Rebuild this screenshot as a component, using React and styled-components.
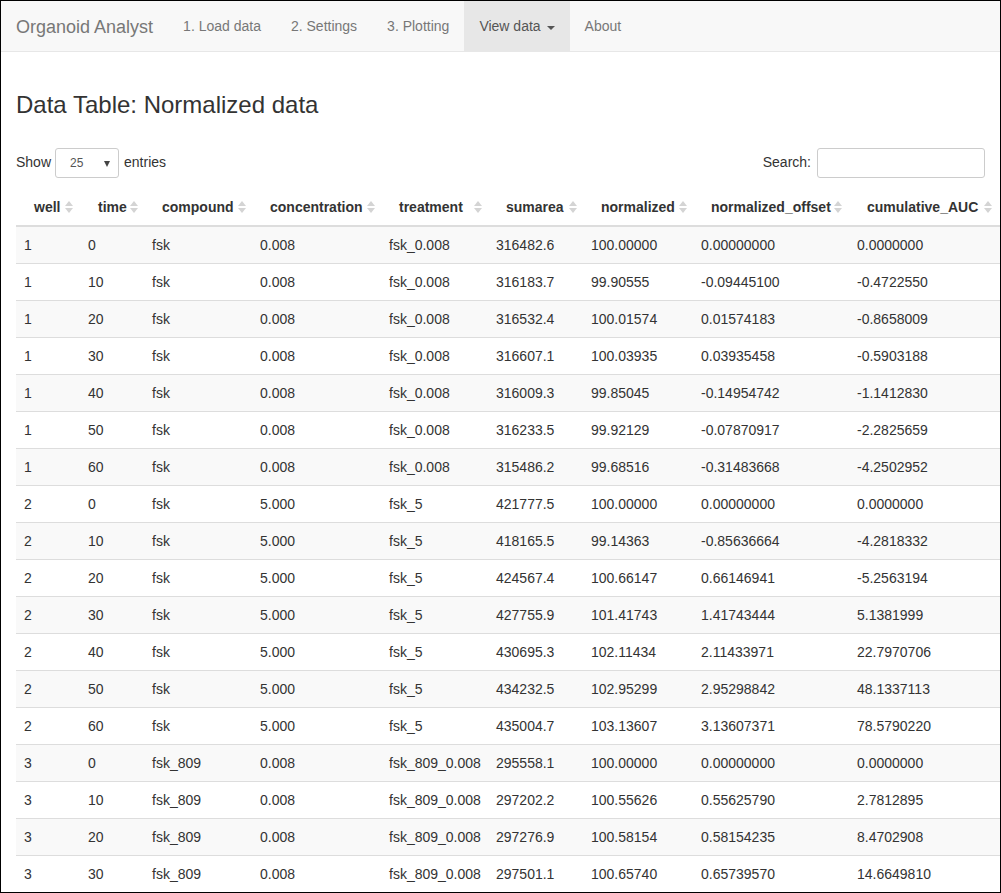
import React from "react";
import styled, { createGlobalStyle } from "styled-components";

const Global = createGlobalStyle`
  html, body { margin: 0; padding: 0; background: #fff; }
  body { font-family: "Liberation Sans", Arial, sans-serif; font-size: 14px; line-height: 1.42857; color: #333; }
  * { box-sizing: border-box; }
`;

const Frame = styled.div`
  width: 1001px;
  height: 893px;
  border: 1px solid #000;
  overflow: hidden;
  background: #fff;
`;

const Navbar = styled.nav`
  display: flex;
  align-items: stretch;
  height: 51px;
  background: #f8f8f8;
  border-bottom: 1px solid #e7e7e7;
  padding: 0 15px;
`;

const Brand = styled.div`
  font-size: 18px;
  line-height: 20px;
  color: #777;
  padding: 16px 15px 14px;
  margin-left: -15px;
`;

const NavItem = styled.div`
  display: flex;
  align-items: center;
  padding: 1px 15px 0;
  height: 50px;
  color: ${(p) => (p.$active ? "#555" : "#777")};
  background: ${(p) => (p.$active ? "#e7e7e7" : "transparent")};
`;

const Caret = styled.span`
  display: inline-block;
  width: 0;
  height: 0;
  margin-left: 6px;
  margin-top: 2px;
  border-top: 4px solid #555;
  border-left: 4px solid transparent;
  border-right: 4px solid transparent;
`;

const Container = styled.div`
  padding: 20px 15px 0;
`;

const Title = styled.h3`
  font-size: 24px;
  font-weight: 500;
  line-height: 1.1;
  margin: 20px 0 10px;
`;

const Controls = styled.div`
  display: flex;
  justify-content: space-between;
  align-items: center;
  margin-top: 30px;
  height: 30px;
`;

const Label = styled.label`
  display: flex;
  align-items: center;
  gap: 4px;
  white-space: nowrap;
`;

const SelectBox = styled.div`
  position: relative;
  width: 64px;
  height: 30px;
  border: 1px solid #ccc;
  border-radius: 3px;
  font-size: 12px;
  display: flex;
  align-items: center;
  padding-left: 14px;
  color: #555;
  margin-right: 1px;
`;

const Arrow = styled.span`
  position: absolute;
  right: 8px;
  top: 12px;
  width: 0;
  height: 0;
  border-top: 6px solid #444;
  border-left: 3.5px solid transparent;
  border-right: 3.5px solid transparent;
`;

const SearchInput = styled.input`
  width: 168px;
  height: 30px;
  border: 1px solid #ccc;
  border-radius: 3px;
  margin-left: 2px;
  font-size: 12px;
  padding: 5px 10px;
  outline: none;
`;

const Table = styled.table`
  width: 984px;
  table-layout: fixed;
  border-collapse: collapse;
  margin-top: 11px;
`;

const Th = styled.th`
  position: relative;
  text-align: left;
  font-weight: bold;
  padding: 8px 18px;
  line-height: 20px;
  border-bottom: 2px solid #ddd;
  white-space: nowrap;
`;

const SortIcon = styled.span`
  position: absolute;
  right: ${(p) => p.$right}px;
  top: 50%;
  transform: translateY(-50%);
  display: flex;
  flex-direction: column;
  gap: 2px;
  &::before, &::after {
    content: "";
    width: 0;
    height: 0;
    border-left: 4px solid transparent;
    border-right: 4px solid transparent;
  }
  &::before { border-bottom: 5px solid #d4d4d4; }
  &::after { border-top: 5px solid #d4d4d4; }
`;

const Tr = styled.tr`
  background: ${(p) => (p.$odd ? "#f9f9f9" : "#fff")};
`;

const Td = styled.td`
  padding: 8px;
  line-height: 20px;
  border-top: 1px solid #ddd;
  white-space: nowrap;
`;

const cols = [
  ["well", 64, 7],
  ["time", 64, 6],
  ["compound", 108, 6],
  ["concentration", 129, 6],
  ["treatment", 107, 6],
  ["sumarea", 95, 6],
  ["normalized", 110, 6],
  ["normalized_offset", 156, 7],
  ["cumulative_AUC", 151, 8],
];

const raw = [
  "1 0 fsk 0.008 fsk_0.008 316482.6 100.00000 0.00000000 0.0000000",
  "1 10 fsk 0.008 fsk_0.008 316183.7 99.90555 -0.09445100 -0.4722550",
  "1 20 fsk 0.008 fsk_0.008 316532.4 100.01574 0.01574183 -0.8658009",
  "1 30 fsk 0.008 fsk_0.008 316607.1 100.03935 0.03935458 -0.5903188",
  "1 40 fsk 0.008 fsk_0.008 316009.3 99.85045 -0.14954742 -1.1412830",
  "1 50 fsk 0.008 fsk_0.008 316233.5 99.92129 -0.07870917 -2.2825659",
  "1 60 fsk 0.008 fsk_0.008 315486.2 99.68516 -0.31483668 -4.2502952",
  "2 0 fsk 5.000 fsk_5 421777.5 100.00000 0.00000000 0.0000000",
  "2 10 fsk 5.000 fsk_5 418165.5 99.14363 -0.85636664 -4.2818332",
  "2 20 fsk 5.000 fsk_5 424567.4 100.66147 0.66146941 -5.2563194",
  "2 30 fsk 5.000 fsk_5 427755.9 101.41743 1.41743444 5.1381999",
  "2 40 fsk 5.000 fsk_5 430695.3 102.11434 2.11433971 22.7970706",
  "2 50 fsk 5.000 fsk_5 434232.5 102.95299 2.95298842 48.1337113",
  "2 60 fsk 5.000 fsk_5 435004.7 103.13607 3.13607371 78.5790220",
  "3 0 fsk_809 0.008 fsk_809_0.008 295558.1 100.00000 0.00000000 0.0000000",
  "3 10 fsk_809 0.008 fsk_809_0.008 297202.2 100.55626 0.55625790 2.7812895",
  "3 20 fsk_809 0.008 fsk_809_0.008 297276.9 100.58154 0.58154235 8.4702908",
  "3 30 fsk_809 0.008 fsk_809_0.008 297501.1 100.65740 0.65739570 14.6649810",
];
const rows = raw.map((r) => r.split(" "));

export default function App() {
  return (
    <>
      <Global />
      <Frame>
        <Navbar>
          <Brand>Organoid Analyst</Brand>
          <NavItem>1. Load data</NavItem>
          <NavItem>2. Settings</NavItem>
          <NavItem>3. Plotting</NavItem>
          <NavItem $active>
            View data<Caret />
          </NavItem>
          <NavItem>About</NavItem>
        </Navbar>
        <Container>
          <Title>Data Table: Normalized data</Title>
          <Controls>
            <Label>
              Show
              <SelectBox>
                25
                <Arrow />
              </SelectBox>
              entries
            </Label>
            <Label>
              Search:
              <SearchInput type="search" />
            </Label>
          </Controls>
          <Table>
            <colgroup>
              {cols.map(([n, w]) => (
                <col key={n} style={{ width: w }} />
              ))}
            </colgroup>
            <thead>
              <tr>
                {cols.map(([n, , r]) => (
                  <Th key={n}>
                    {n}
                    <SortIcon $right={r} />
                  </Th>
                ))}
              </tr>
            </thead>
            <tbody>
              {rows.map((r, i) => (
                <Tr key={i} $odd={i % 2 === 0}>
                  {r.map((c, j) => (
                    <Td key={j}>{c}</Td>
                  ))}
                </Tr>
              ))}
            </tbody>
          </Table>
        </Container>
      </Frame>
    </>
  );
}
